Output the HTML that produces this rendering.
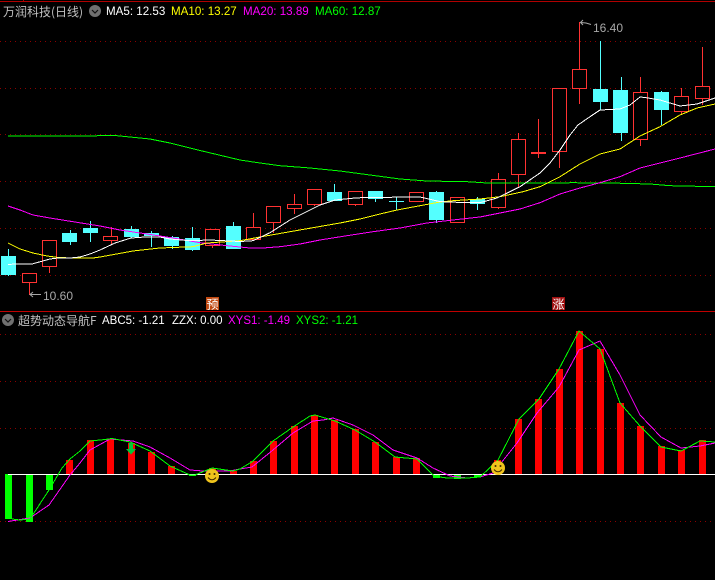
<!DOCTYPE html>
<html><head><meta charset="utf-8"><style>
html,body{margin:0;padding:0;background:#000;width:715px;height:580px;overflow:hidden}
svg{display:block}
text{font-family:"Liberation Sans","WenQuanYi Zen Hei",sans-serif;font-size:11.6px}
.cn{font-family:"WenQuanYi Zen Hei","Noto Sans CJK SC",sans-serif;font-size:12px}
.r{fill:#ff3232}
.k{fill:#000}
.rw{stroke:#ff3232;stroke-width:1;fill:none}
.c{fill:#54ffff}
.cw{stroke:#54ffff;stroke-width:1;fill:none}
.g{stroke:#8c0000;stroke-width:1;stroke-dasharray:1 4;fill:none}
.l{fill:none;stroke-width:1;shape-rendering:crispEdges}
</style></head><body>
<svg width="715" height="580" viewBox="0 0 715 580" xmlns="http://www.w3.org/2000/svg">
<rect width="715" height="580" fill="#000"/>
<g shape-rendering="crispEdges">
<path d="M0 1.5H715M23.5 0V1" stroke="#b00000" fill="none"/>
<path d="M0 311.5H715" stroke="#c00000" fill="none"/>
<path class="g" d="M0 41.5H715M0 88.5H715M0 134.5H715M0 181.5H715M0 228.5H715M0 275.5H715M0 334.5H715M0 381.5H715M0 428.5H715M0 521.5H715"/>

<!-- candle wicks -->
<path class="cw" d="M8.5 249V276M70.5 230V245M90.5 221V242M131.5 226V238M151.5 231V247M172.5 236V249M192.5 227V251M233.5 222V249M334.5 184V201M375.5 191V202M396.5 197V210M436.5 191V223M477.5 197V210M600.5 41V110M621.5 77V141M661.5 91V125"/>
<path class="rw" d="M29.5 282V295M49.5 266V273M111.5 227V244M212.5 245V248M253.5 213V240M273.5 222V233M294.5 194V214M314.5 204V206M355.5 204V206M498.5 173V209M518.5 133V187M538.5 119V158M559.5 151V168M579.5 22V104M640.5 77V146M681.5 88V115M702.5 47V105"/>
<!-- cyan bodies -->
<rect class="c" x="1" y="256" width="15" height="19"/>
<rect class="c" x="62" y="233" width="15" height="9"/>
<rect class="c" x="83" y="228" width="15" height="5"/>
<rect class="c" x="124" y="229" width="15" height="8"/>
<rect class="c" x="144" y="233" width="15" height="3"/>
<rect class="c" x="164" y="237" width="15" height="9"/>
<rect class="c" x="185" y="238" width="15" height="12"/>
<rect class="c" x="226" y="226" width="15" height="23"/>
<rect class="c" x="327" y="192" width="15" height="9"/>
<rect class="c" x="368" y="191" width="15" height="8"/>
<rect class="c" x="389" y="201" width="15" height="1"/>
<rect class="c" x="429" y="192" width="15" height="28"/>
<rect class="c" x="470" y="199" width="15" height="5"/>
<rect class="c" x="593" y="89" width="15" height="13"/>
<rect class="c" x="613" y="90" width="15" height="43"/>
<rect class="c" x="654" y="92" width="15" height="18"/>
<!-- red bodies -->
<rect class="r" x="22" y="273" width="15" height="10"/><rect class="k" x="23" y="274" width="13" height="8"/>
<rect class="r" x="42" y="240" width="15" height="27"/><rect class="k" x="43" y="241" width="13" height="25"/>
<rect class="r" x="103" y="236" width="15" height="5"/><rect class="k" x="104" y="237" width="13" height="3"/>
<rect class="r" x="205" y="229" width="15" height="17"/><rect class="k" x="206" y="230" width="13" height="15"/>
<rect class="r" x="246" y="227" width="15" height="13"/><rect class="k" x="247" y="228" width="13" height="11"/>
<rect class="r" x="266" y="206" width="15" height="17"/><rect class="k" x="267" y="207" width="13" height="15"/>
<rect class="r" x="287" y="204" width="15" height="5"/><rect class="k" x="288" y="205" width="13" height="3"/>
<rect class="r" x="307" y="189" width="15" height="16"/><rect class="k" x="308" y="190" width="13" height="14"/>
<rect class="r" x="348" y="191" width="15" height="14"/><rect class="k" x="349" y="192" width="13" height="12"/>
<rect class="r" x="409" y="192" width="15" height="10"/><rect class="k" x="410" y="193" width="13" height="8"/>
<rect class="r" x="450" y="197" width="15" height="26"/><rect class="k" x="451" y="198" width="13" height="24"/>
<rect class="r" x="491" y="179" width="15" height="29"/><rect class="k" x="492" y="180" width="13" height="27"/>
<rect class="r" x="511" y="139" width="15" height="36"/><rect class="k" x="512" y="140" width="13" height="34"/>
<rect class="r" x="531" y="152" width="15" height="2"/>
<rect class="r" x="552" y="88" width="15" height="64"/><rect class="k" x="553" y="89" width="13" height="62"/>
<rect class="r" x="572" y="69" width="15" height="20"/><rect class="k" x="573" y="70" width="13" height="18"/>
<rect class="r" x="633" y="92" width="15" height="48"/><rect class="k" x="634" y="93" width="13" height="46"/>
<rect class="r" x="674" y="96" width="15" height="16"/><rect class="k" x="675" y="97" width="13" height="14"/>
<rect class="r" x="695" y="86" width="15" height="13"/><rect class="k" x="696" y="87" width="13" height="11"/>
</g>

<!-- moving averages -->
<polyline class="l" stroke="#00ff00" points="8,136 80,136 115,135.5 130,137 150,139 170,143 198,150 240,160 260,163 280,165.7 310,168 340,171 370,175 400,179 427,181 467,181.7 480,182.5 487,183 567,183 570,182.7 610,183 650,184 670,185.7 715,186.7"/>
<polyline class="l" stroke="#ff00ff" points="8,206 20,210 33,215 50,218 73,221.7 100,226 120,230 147,234 173,238 200,242.7 227,245.7 240,247 250,248 263,248 280,246.7 300,244 320,240 347,235.7 373,231.7 400,228 427,223 453,220 480,217 520,209 540,202.7 560,194 580,188 600,182.7 620,176.7 640,168 660,163 680,158 715,149"/>
<polyline class="l" stroke="#ffff00" points="8,243 20,249 33,253 47,256 60,257.7 93,258 100,257 133,251 160,248 193,246.7 207,243 240,240.7 260,237 290,231.7 317,227 340,223 360,219 380,214 397,210 420,205.7 440,202 453,200.7 480,199 500,196.7 523,191.7 540,186.7 560,176.7 580,164 600,154 620,149 640,136 660,126.7 680,115 697,108 715,104"/>
<polyline class="l" stroke="#ffffff" points="8,264.3 32,264 50,259 58,258 70,258 80,257 90,254 100,250 115,243 131,238 145,237 160,237 170,239 190,240.7 210,240 240,241.5 253,240.7 270,232.7 290,220 320,205 335,200 355,198 365,197.5 420,197 433,200 440,201.6 467,202.7 480,202.7 497,198 520,186.7 540,173 550,163 560,150 570,135 578,125 590,116.7 600,110 620,109 630,105 640,97 645,97.5 660,100 680,106 697,104 715,98"/>

<!-- price labels -->
<path d="M591 24.5L586 23 580.5 22.5M583 20L580.5 22.5 583 25" fill="none" stroke="#a8a8a8"/>
<text x="593" y="32" style="font-size:12px" fill="#a8a8a8">16.40</text>
<path d="M41 294.5H30M33 292L30 294.5 33 297" fill="none" stroke="#a8a8a8"/>
<text x="43" y="300" style="font-size:12px" fill="#a8a8a8">10.60</text>

<!-- badges -->
<rect x="206" y="297" width="13" height="13" fill="#c04810" shape-rendering="crispEdges"/>
<text x="206.5" y="308.5" class="cn" fill="#fff">预</text>
<rect x="552" y="297" width="13" height="13" fill="#a01010" shape-rendering="crispEdges"/>
<text x="552.5" y="308.5" class="cn" fill="#fff">涨</text>

<!-- header top -->
<text x="3" y="16" class="cn" fill="#c0c0c0">万润科技(日线)</text>
<circle cx="95" cy="11" r="6" fill="#707070"/>
<path d="M92 10L95 13 98 10" fill="none" stroke="#111" stroke-width="1.2"/>
<text x="106" y="15" fill="#ffffff">MA5: 12.53</text>
<text x="171" y="15" fill="#ffff00">MA10: 13.27</text>
<text x="243" y="15" fill="#ff00ff">MA20: 13.89</text>
<text x="315" y="15" fill="#00ff00">MA60: 12.87</text>

<!-- header bottom -->
<circle cx="8" cy="320" r="6" fill="#707070"/>
<path d="M5 319L8 322 11 319" fill="none" stroke="#111" stroke-width="1.2"/>
<text x="18" y="325" class="cn" fill="#c0c0c0">超势动态导航F</text>
<text x="102" y="324" style="font-size:11.5px" fill="#ffffff">ABC5: -1.21</text>
<text x="172" y="324" style="font-size:11.5px" fill="#ffffff">ZZX: 0.00</text>
<text x="228" y="324" style="font-size:11.5px" fill="#ff00ff">XYS1: -1.49</text>
<text x="296" y="324" style="font-size:11.5px" fill="#00ff00">XYS2: -1.21</text>

<!-- bars -->
<g shape-rendering="crispEdges">
<g fill="#ff0000">
<rect x="66" y="460" width="7" height="14"/>
<rect x="87" y="440" width="7" height="34"/>
<rect x="107" y="439" width="7" height="35"/>
<rect x="128" y="443" width="7" height="31"/>
<rect x="148" y="452" width="7" height="22"/>
<rect x="168" y="466" width="7" height="8"/>
<rect x="209" y="468" width="7" height="6"/>
<rect x="230" y="471" width="7" height="3"/>
<rect x="250" y="461" width="7" height="13"/>
<rect x="270" y="441" width="7" height="33"/>
<rect x="291" y="426" width="7" height="48"/>
<rect x="311" y="415" width="7" height="59"/>
<rect x="331" y="420" width="7" height="54"/>
<rect x="352" y="429" width="7" height="45"/>
<rect x="372" y="442" width="7" height="32"/>
<rect x="393" y="457" width="7" height="17"/>
<rect x="413" y="458" width="7" height="16"/>
<rect x="494" y="460" width="7" height="14"/>
<rect x="515" y="419" width="7" height="55"/>
<rect x="535" y="399" width="7" height="75"/>
<rect x="556" y="369" width="7" height="105"/>
<rect x="576" y="331" width="7" height="143"/>
<rect x="597" y="349" width="7" height="125"/>
<rect x="617" y="403" width="7" height="71"/>
<rect x="637" y="426" width="7" height="48"/>
<rect x="658" y="446" width="7" height="28"/>
<rect x="678" y="450" width="7" height="24"/>
<rect x="699" y="440" width="7" height="34"/>
</g>
<g fill="#00ff00">
<rect x="5" y="474" width="7" height="45"/>
<rect x="26" y="474" width="7" height="48"/>
<rect x="46" y="474" width="7" height="16"/>
<rect x="189" y="474" width="7" height="2"/>
<rect x="433" y="474" width="7" height="4"/>
<rect x="454" y="474" width="7" height="5"/>
<rect x="474" y="474" width="7" height="3"/>
</g>
<rect x="8" y="474" width="707" height="1" fill="#ffffff"/>
</g>

<!-- indicator lines -->
<polyline class="l" stroke="#ff00ff" points="8,521.5 30,518 49,505 70,475 80,463 90,450 110,439 133,441 150,447 170,458 190,470 203,471 230,471 240,469 252,467 273,450 293,433 313,421 323,420 333,418 353,425 373,435 393,450 417,458 433,468 450,476 467,478 480,477 493,473 517,443 537,413 559,387 579,350 600,341 620,375 640,415 661,437 681,448 700,446 715,443"/>
<polyline class="l" stroke="#00ff00" points="12,519 20,520 30,519 49,490 62,468 70,459 80,451 90,441 105,439.5 112,438.5 130,442 150,451 170,466 190,475 195,475 212,468 233,471 240,469 250,463 253,461 273,441 293,427 310,416 315,415 335,421 355,430 375,442 395,457 417,459 433,475 440,477 447,478 467,478 480,477 498,460 519,419 539,399 559,369 579,331 600,349 620,403 640,426 661,447 681,451 700,441 715,442"/>

<!-- down arrow -->
<path d="M129 443H133V449H136L131 454.500 126 449H129Z" fill="#00c838"/>

<!-- smileys -->
<g>
<circle cx="212" cy="476" r="7" fill="#f0c41c"/>
<circle cx="209.500" cy="474" r="1" fill="#402800"/><circle cx="214.500" cy="474" r="1" fill="#402800"/>
<path d="M208 477.500Q212 482 216 477.500" fill="none" stroke="#402800"/>
</g>
<g>
<circle cx="498" cy="468" r="7" fill="#f0c41c"/>
<circle cx="495.500" cy="466" r="1" fill="#402800"/><circle cx="500.500" cy="466" r="1" fill="#402800"/>
<path d="M494 469.500Q498 474 502 469.500" fill="none" stroke="#402800"/>
</g>
</svg>
</body></html>
